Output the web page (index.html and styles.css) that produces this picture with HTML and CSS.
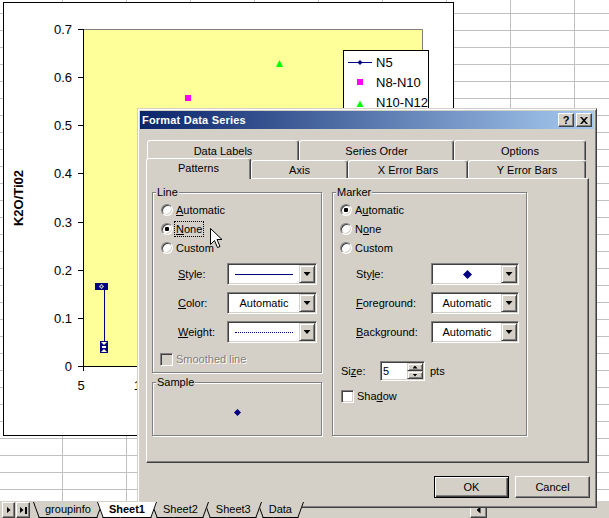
FILE: index.html
```html
<!DOCTYPE html>
<html>
<head>
<meta charset="utf-8">
<link rel="stylesheet" href="styles.css">
</head>
<body>
<div class="sheet">
  <div class="chart">
    <svg width="451" height="434" viewBox="3 2 451 434">
      <rect x="3.5" y="2.5" width="450" height="433" fill="#fff" stroke="#000"/>
      <rect x="84" y="30" width="338" height="336" fill="#ffff99"/>
      <path d="M83 29.5H422.5V366" stroke="#808080" fill="none"/>
      <path d="M83.5 29V366.5H422" stroke="#000" fill="none"/>
      <path d="M78 29.5H83M78 77.5H83M78 125.5H83M78 173.5H83M78 222.5H83M78 270.5H83M78 318.5H83M78 366.5H83M83.5 366V371" stroke="#000" fill="none"/>
      <g class="ylab" text-anchor="end">
        <text x="72" y="33.5">0.7</text>
        <text x="72" y="81.5">0.6</text>
        <text x="72" y="129.5">0.5</text>
        <text x="72" y="178">0.4</text>
        <text x="72" y="226.5">0.3</text>
        <text x="72" y="274.5">0.2</text>
        <text x="72" y="322.5">0.1</text>
        <text x="72" y="370.5">0</text>
      </g>
      <text x="81" y="389.5" text-anchor="middle">5</text>
      <text x="141" y="389.5" text-anchor="middle">10</text>
      <text class="ytitle" transform="translate(23 198) rotate(-90)" text-anchor="middle">K2O/Ti02</text>
      <path d="M104.5 290V341" stroke="#000080" fill="none"/>
      <rect x="95" y="283" width="13" height="7" fill="#000080"/>
      <path d="M99 286.5L101.5 284L104 286.5L101.5 289Z" fill="#ffffcc"/>
      <rect x="100.5" y="285.5" width="2" height="2" fill="#000080"/>
      <rect x="100" y="341" width="8" height="12" fill="#000080"/>
      <path d="M101 342H107L104 345Z M101 352H107L104 349Z" fill="#ffffcc"/>
      <rect x="102" y="346" width="4" height="2" fill="#ffffff"/>
      <rect x="185" y="95" width="6" height="6" fill="#ff00ff"/>
      <path d="M276 67L279.5 60L283 67Z" fill="#00ff00"/>
      <rect x="343.5" y="50.5" width="85" height="75" fill="#fff" stroke="#000"/>
      <path d="M348 62.5H372" stroke="#000080"/>
      <path d="M360 60L362.5 62.5L360 65L357.5 62.5Z" fill="#000080"/>
      <text x="376" y="66.7">N5</text>
      <rect x="357" y="79" width="6" height="6" fill="#ff00ff"/>
      <text x="376" y="86.7">N8-N10</text>
      <path d="M356.5 107L360 100.5L363.5 107Z" fill="#00ff00"/>
      <text x="376" y="106.7">N10-N12</text>
    </svg>
  </div>
</div>
<div class="tabbar">
  <div class="navbtn"><span class="rtri"></span></div>
  <div class="navbtn"><span class="rtri"></span><span class="navbar"></span></div>
  <div class="stabs">
    <div class="stab s1">groupinfo</div>
    <div class="stab s2 active">Sheet1</div>
    <div class="stab s3">Sheet2</div>
    <div class="stab s4">Sheet3</div>
    <div class="stab s5">Data</div>
  </div>
  <div class="hscroll"><div class="hbtn"><span class="ltri"></span></div></div>
</div>

<div class="dialog">
  <div class="caption">
    <span class="caption-title">Format Data Series</span>
    <span class="cbtns">
      <span class="cbtn">?</span>
      <span class="cbtn"><svg width="8" height="7" viewBox="0 0 8 7"><path d="M0 0H2L4 2.3L6 0H8L5 3.5L8 7H6L4 4.7L2 7H0L3 3.5Z" fill="#000"/></svg></span>
    </span>
  </div>
  <div class="tabs">
    <div class="tabrow back">
      <div class="tab w-dl">Data Labels</div>
      <div class="tab w-so">Series Order</div>
      <div class="tab w-op">Options</div>
    </div>
    <div class="tabrow front">
      <div class="tab sel w-pa">Patterns</div>
      <div class="tab w-ax">Axis</div>
      <div class="tab w-xe">X Error Bars</div>
      <div class="tab w-ye">Y Error Bars</div>
    </div>
  </div>
  <div class="panel">
    <div class="left-col">
      <div class="group line-group">
        <div class="gtitle">Line</div>
        <div class="opt"><span class="radio"></span><span class="lbl"><u>A</u>utomatic</span></div>
        <div class="opt"><span class="radio on"></span><span class="lbl focus"><u>N</u>one</span></div>
        <div class="opt"><span class="radio"></span><span class="lbl">Custom</span></div>
        <div class="crow first">
          <span class="clabel"><u>S</u>tyle:</span>
          <div class="combo"><div class="cval"><span class="sline"></span></div><span class="dd"><span class="darr"></span></span></div>
        </div>
        <div class="crow">
          <span class="clabel"><u>C</u>olor:</span>
          <div class="combo"><div class="cval">Automatic</div><span class="dd"><span class="darr"></span></span></div>
        </div>
        <div class="crow">
          <span class="clabel"><u>W</u>eight:</span>
          <div class="combo"><div class="cval"><span class="dline"></span></div><span class="dd"><span class="darr"></span></span></div>
        </div>
        <div class="chkrow"><span class="chk dis"></span><span class="lbl dis">Smoothed line</span></div>
      </div>
      <div class="group sample-group">
        <div class="gtitle">Sample</div>
        <div class="sample-area">
          <svg width="7" height="7" viewBox="0 0 7 7"><path d="M3.5 0L7 3.5L3.5 7L0 3.5Z" fill="#000080"/></svg>
        </div>
      </div>
    </div>
    <div class="group marker-group">
      <div class="gtitle">Marker</div>
      <div class="opt"><span class="radio on"></span><span class="lbl">A<u>u</u>tomatic</span></div>
      <div class="opt"><span class="radio"></span><span class="lbl">N<u>o</u>ne</span></div>
      <div class="opt"><span class="radio"></span><span class="lbl">Custom</span></div>
      <div class="crow first">
        <span class="clabel">Sty<u>l</u>e:</span>
        <div class="combo"><div class="cval"><svg width="9" height="9" viewBox="0 0 9 9"><path d="M4.5 0L9 4.5L4.5 9L0 4.5Z" fill="#000080"/></svg></div><span class="dd"><span class="darr"></span></span></div>
      </div>
      <div class="crow">
        <span class="clabel"><u>F</u>oreground:</span>
        <div class="combo"><div class="cval">Automatic</div><span class="dd"><span class="darr"></span></span></div>
      </div>
      <div class="crow">
        <span class="clabel"><u>B</u>ackground:</span>
        <div class="combo"><div class="cval">Automatic</div><span class="dd"><span class="darr"></span></span></div>
      </div>
      <div class="sizerow">
        <span class="slabel">Si<u>z</u>e:</span>
        <div class="spin">
          <span class="spin-val">5</span>
          <span class="spin-btns"><span class="sb"><span class="uarr"></span></span><span class="sb"><span class="darr small"></span></span></span>
        </div>
        <span class="pts">pts</span>
      </div>
      <div class="chkrow shadow"><span class="chk"></span><span class="lbl">Sha<u>d</u>ow</span></div>
    </div>
  </div>
  <div class="btnrow">
    <div class="btn default">OK</div>
    <div class="btn">Cancel</div>
  </div>
</div>

<svg class="cursor" width="13" height="21" viewBox="0 0 13 21"><path d="M0.5 0.5V16.5L4.5 12.5L7.5 19.5L10 18.5L7 11.5H12Z" fill="#fff" stroke="#000"/></svg>
</body>
</html>
```

FILE: styles.css
```css
* { box-sizing: border-box; }
html, body { margin: 0; padding: 0; }
body {
  width: 609px;
  height: 518px;
  overflow: hidden;
  position: relative;
  background: #fff;
  font-family: "Liberation Sans", Arial, sans-serif;
  font-size: 11px;
  color: #000;
}

/* worksheet */
.sheet {
  position: relative;
  height: 501px;
  background-color: #fff;
  background-image:
    repeating-linear-gradient(to bottom, transparent 0, transparent 16px, #c0c0c0 16px, #c0c0c0 17px),
    repeating-linear-gradient(to right, transparent 0, transparent 63px, #c0c0c0 63px, #c0c0c0 64px);
  background-position: 0 -3px, -1px 0;
}
.chart { position: absolute; left: 3px; top: 2px; width: 451px; height: 434px; }
.chart svg { display: block; font-family: "Liberation Sans", Arial, sans-serif; }
.chart text { font-size: 13px; fill: #000; }
.chart .ytitle { font-weight: bold; }

/* sheet tab bar */
.tabbar { display: flex; height: 17px; background: #d4d0c8; }
.navbtn {
  width: 13px; height: 16px; margin: 1px 0 0 2px;
  display: flex; align-items: center; justify-content: center; gap: 1px;
  border: 1px solid; border-color: #fff #404040 #404040 #fff;
  box-shadow: inset -1px -1px #808080;
  background: #d4d0c8;
}
.navbtn + .navbtn { margin-left: 1px; width: 14px; }
.rtri { width: 4px; height: 7px; background: #000; clip-path: polygon(0 0, 100% 50%, 0 100%); }
.navbar { width: 2px; height: 7px; background: #000; }
.stabs { display: flex; height: 16px; margin-left: 3px; margin-top: 1px; }
.stab { position: relative; z-index: 0; padding: 0 12px; line-height: 14px; margin-right: -6px; }
.stab::before, .stab::after {
  content: ""; position: absolute; top: 0; bottom: 0; width: 50%;
  background: #d4d0c8; border-bottom: 1px solid #000; z-index: -1; transform-origin: top;
}
.stab::before { left: 0; border-left: 1px solid #000; transform: skewX(20deg); }
.stab::after { right: 0; border-right: 1px solid #000; transform: skewX(-20deg); }
.stab.s1 { z-index: 4; }
.stab.s3 { z-index: 3; }
.stab.s4 { z-index: 2; }
.stab.s5 { z-index: 1; }
.stab.active { z-index: 6; font-weight: bold; }
.stab.active::before, .stab.active::after { background: #fff; }
.hscroll { margin-left: auto; width: 139px; display: flex; }
.hbtn {
  width: 17px; height: 16px; margin-top: 1px;
  display: flex; align-items: center; justify-content: center;
  border: 1px solid; border-color: #fff #404040 #404040 #fff;
  box-shadow: inset -1px -1px #808080;
}
.ltri { width: 4px; height: 7px; background: #000; clip-path: polygon(100% 0, 0 50%, 100% 100%); }

/* dialog window */
.dialog {
  position: absolute; left: 137px; top: 108px; width: 460px; height: 400px;
  background: #d4d0c8;
  border: 1px solid; border-color: #d4d0c8 #404040 #404040 #d4d0c8;
  box-shadow: inset 1px 1px #fff, inset -1px -1px #808080;
  padding: 2px;
  display: flex; flex-direction: column;
}
.caption {
  height: 18px; flex: none;
  background: linear-gradient(to right, #0a246a, #a6caf0);
  display: flex; align-items: center;
  padding: 0 2px 0 2px;
  color: #fff; font-weight: bold; font-size: 11px;
}
.caption-title { letter-spacing: 0.2px; }
.cbtns { margin-left: auto; display: flex; gap: 2px; }
.cbtn {
  width: 16px; height: 14px;
  display: flex; align-items: center; justify-content: center;
  background: #d4d0c8; color: #000; font-weight: bold; font-size: 11px;
  border: 1px solid; border-color: #fff #404040 #404040 #fff;
  box-shadow: inset -1px -1px #808080;
}

/* tabs */
.tabs { margin: 11px 0 0 6px; width: 443px; flex: none; }
.tabrow { display: flex; }
.tabrow.back { height: 20px; padding-left: 1px; }
.tabrow.front { height: 18px; }
.tab {
  height: 100%;
  display: flex; align-items: center; justify-content: center;
  background: #d4d0c8;
  border: 1px solid; border-bottom: 0;
  border-color: #fff #404040 transparent #fff;
  box-shadow: inset -1px 0 #808080;
  border-radius: 3px 3px 0 0;
}
.tab.sel { height: 21px; margin-top: -2px; padding-bottom: 2px; position: relative; z-index: 2; }
.w-dl { width: 152px; }
.w-so { width: 155px; }
.w-op { width: 132px; }
.w-pa { width: 105px; }
.w-ax { width: 97px; }
.w-xe { width: 120px; }
.w-ye { width: 118px; }

.panel {
  margin-left: 6px; width: 443px; height: 285px; flex: none;
  border: 1px solid; border-color: #fff #404040 #404040 #fff;
  box-shadow: inset -1px -1px #808080;
  padding: 13px 0 0 5px;
  display: flex; align-items: stretch; gap: 10px;
}

/* group boxes */
.left-col { width: 170px; height: 244px; display: flex; flex-direction: column; }
.group {
  border: 1px solid #808080;
  box-shadow: inset 1px 1px #fff, 1px 1px #fff;
  padding: 0 4px 0 8px;
  display: flex; flex-direction: column;
}
.line-group { height: 181px; }
.sample-group { height: 54px; margin-top: 9px; }
.marker-group { width: 195px; height: 244px; padding-left: 7px; }
.gtitle {
  width: max-content; margin: -7px 0 1px -5px; padding: 0 1px;
  line-height: 13px; background: #d4d0c8;
}
.marker-group .gtitle { margin-left: -4px; }

.opt { height: 19px; display: flex; align-items: center; }
.radio {
  width: 12px; height: 12px; border-radius: 50%; flex: none;
  border: 1px solid; border-color: #808080 #fff #fff #808080;
  box-shadow: inset 1px 1px #404040, inset -1px -1px #d4d0c8;
  background: #fff;
  display: flex; align-items: center; justify-content: center;
}
.radio.on::after { content: ""; width: 4px; height: 4px; border-radius: 1px; background: #000; }
.lbl { margin-left: 2px; padding: 0 1px; line-height: 14px; }
.lbl.focus { outline: 1px dotted #000; outline-offset: 0; }
.lbl.dis { color: #808080; text-shadow: 1px 1px 0 #fff; }

.crow { height: 22px; margin-top: 7px; display: flex; align-items: center; }
.crow.first { margin-top: 6px; }
.clabel { width: 49px; margin-left: 17px; flex: none; }
.marker-group .clabel { width: 75px; margin-left: 16px; }
.combo {
  width: 90px; height: 22px; flex: none;
  border: 1px solid; border-color: #808080 #fff #fff #808080;
  box-shadow: inset 1px 1px #404040, inset -1px -1px #d4d0c8;
  background: #fff; padding: 1px;
  display: flex;
}
.marker-group .combo { width: 88px; }
.cval { flex: 1; display: flex; align-items: center; justify-content: center; }
.sline { width: 58px; height: 1px; background: #000080; }
.dline { width: 58px; height: 0; border-top: 1px dotted #000080; }
.dd {
  width: 16px; height: 18px; flex: none;
  display: flex; align-items: center; justify-content: center;
  background: #d4d0c8;
  border: 1px solid; border-color: #d4d0c8 #404040 #404040 #d4d0c8;
  box-shadow: inset 1px 1px #fff, inset -1px -1px #808080;
}
.darr { width: 7px; height: 4px; background: #000; clip-path: polygon(0 0, 100% 0, 50% 100%); }
.uarr { width: 5px; height: 3px; background: #000; clip-path: polygon(50% 0, 100% 100%, 0 100%); }
.darr.small { width: 5px; height: 3px; }

.chkrow { height: 18px; margin-top: 7px; display: flex; align-items: center; }
.chk {
  width: 13px; height: 13px; margin-left: -1px; flex: none;
  border: 1px solid; border-color: #808080 #fff #fff #808080;
  box-shadow: inset 1px 1px #404040, inset -1px -1px #d4d0c8;
  background: #fff;
}
.chk.dis { background: #d4d0c8; }
.chkrow .lbl { margin-left: 2px; }
.marker-group .chkrow { margin-top: 6px; }
.marker-group .chk { margin-left: 1px; }

.sample-area { flex: 1; display: flex; align-items: center; justify-content: center; margin-left: -4px; }

.sizerow { height: 20px; margin-top: 18px; display: flex; align-items: center; }
.slabel { width: 40px; padding-left: 1px; flex: none; }
.spin {
  width: 45px; height: 20px; flex: none;
  border: 1px solid; border-color: #808080 #fff #fff #808080;
  box-shadow: inset 1px 1px #404040, inset -1px -1px #d4d0c8;
  background: #fff; padding: 1px;
  display: flex;
}
.spin-val { flex: 1; padding-left: 1px; line-height: 16px; }
.spin-btns { width: 16px; display: flex; flex-direction: column; }
.sb {
  flex: 1; display: flex; align-items: center; justify-content: center;
  background: #d4d0c8;
  border: 1px solid; border-color: #d4d0c8 #404040 #404040 #d4d0c8;
  box-shadow: inset 1px 1px #fff, inset -1px -1px #808080;
}
.pts { margin-left: 5px; }

/* buttons */
.btnrow { display: flex; justify-content: flex-end; gap: 6px; margin-top: 13px; padding-right: 4px; }
.btn {
  width: 75px; height: 22px;
  display: flex; align-items: center; justify-content: center;
  border: 1px solid; border-color: #fff #404040 #404040 #fff;
  box-shadow: inset -1px -1px #808080;
}
.btn.default {
  border-color: #000;
  box-shadow: inset 1px 1px #fff, inset -1px -1px #404040, inset -2px -2px #808080;
}

.cursor { position: absolute; left: 210px; top: 228px; }
```
